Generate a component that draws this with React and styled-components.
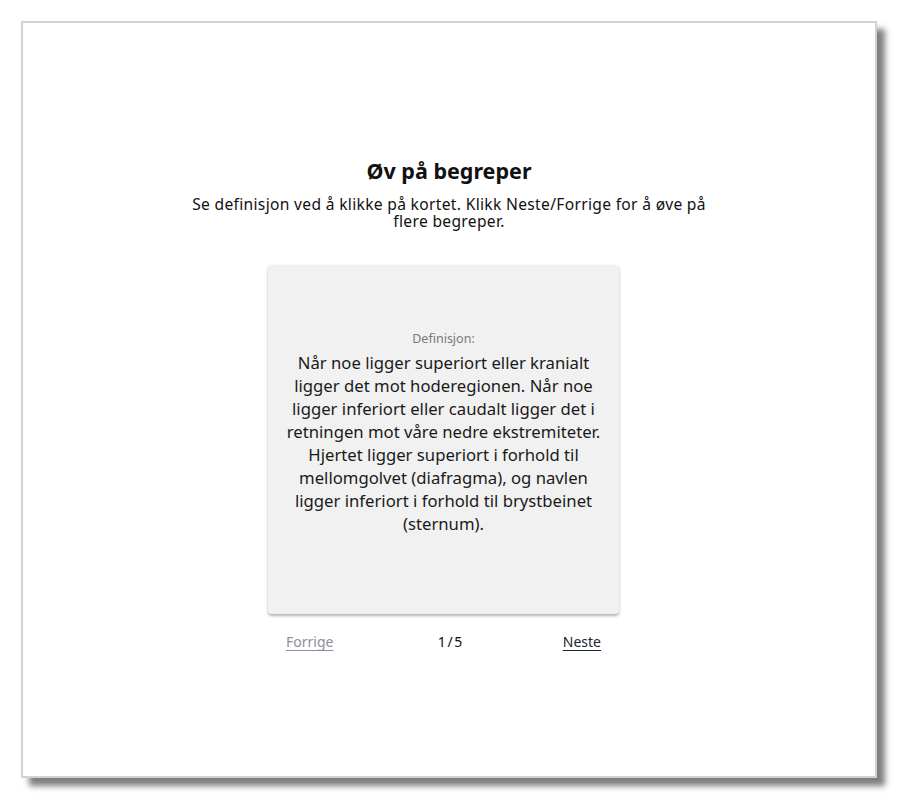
import React, { useState } from 'react';
import styled, { createGlobalStyle } from 'styled-components';

const GlobalStyle = createGlobalStyle`
  html, body {
    margin: 0;
    padding: 0;
    background: #ffffff;
    font-family: "Noto Sans", "Open Sans", sans-serif;
  }
  body {
    padding-bottom: 20px;
  }
`

const Frame = styled.div`
  box-sizing: border-box;
  margin: 21px 23px 0 21px;
  height: 757px;
  border: 2px solid #d2d2d2;
  background: #fff;
  box-shadow: 8px 8px 6px rgba(0, 0, 0, 0.5);
  display: flex;
  flex-direction: column;
  align-items: center;
  padding-top: 133px;
`

const Title = styled.h1`
  margin: 0;
  font-size: 21.5px;
  font-weight: 700;
  color: #111;
  line-height: 30px;
`

const Intro = styled.p`
  margin: 10px 0 0;
  width: 540px;
  text-align: center;
  font-size: 15.6px;
  letter-spacing: 0.32px;
  line-height: 17px;
  color: #111;
`

const Card = styled.button`
  box-sizing: border-box;
  margin: 35px 11px 0 0;
  width: 351px;
  height: 349px;
  border: none;
  border-radius: 4px;
  background: #f1f1f1;
  box-shadow: 0 2px 3px rgba(0, 0, 0, 0.3);
  display: flex;
  flex-direction: column;
  align-items: center;
  justify-content: center;
  padding: 0 14px 14px;
  cursor: pointer;
  font-family: inherit;
`

const Label = styled.div`
  font-size: 12.5px;
  color: #7a7a7a;
  margin-bottom: 4px;
`

const Definition = styled.div`
  font-size: 16.7px;
  line-height: 23px;
  color: #1a1a1a;
  text-align: center;
`

const Nav = styled.div`
  box-sizing: border-box;
  width: 351px;
  margin: 18px 11px 0 0;
  padding: 0 18px;
  display: flex;
  justify-content: space-between;
  align-items: center;
  font-size: 14px;
`

const NavLink = styled.button`
  background: none;
  border: none;
  padding: 0;
  font-family: inherit;
  font-size: 14px;
  text-decoration: underline;
  text-underline-offset: 3px;
  color: ${props => props.disabled ? '#8e8e96' : '#1c2333'};
  cursor: ${props => props.disabled ? 'default' : 'pointer'};
`

const Counter = styled.span`
  color: #111;
  word-spacing: -2px;
  margin-left: 4px;
`

const terms = [
  'Når noe ligger superiort eller kranialt ligger det mot hoderegionen. Når noe ligger inferiort eller caudalt ligger det i retningen mot våre nedre ekstremiteter. Hjertet ligger superiort i forhold til mellomgolvet (diafragma), og navlen ligger inferiort i forhold til brystbeinet (sternum).',
]

export default function App() {
  const [index, setIndex] = useState(0)
  const total = 5

  return (
    <>
      <GlobalStyle />
      <Frame>
        <Title>Øv på begreper</Title>
        <Intro>Se definisjon ved å klikke på kortet. Klikk Neste/Forrige for å øve på flere begreper.</Intro>
        <Card>
          <Label>Definisjon:</Label>
          <Definition>{terms[0]}</Definition>
        </Card>
        <Nav>
          <NavLink disabled={index === 0} onClick={() => setIndex(index - 1)}>Forrige</NavLink>
          <Counter>{index + 1} / {total}</Counter>
          <NavLink disabled={index === total - 1} onClick={() => setIndex(index + 1)}>Neste</NavLink>
        </Nav>
      </Frame>
    </>
  )
}
